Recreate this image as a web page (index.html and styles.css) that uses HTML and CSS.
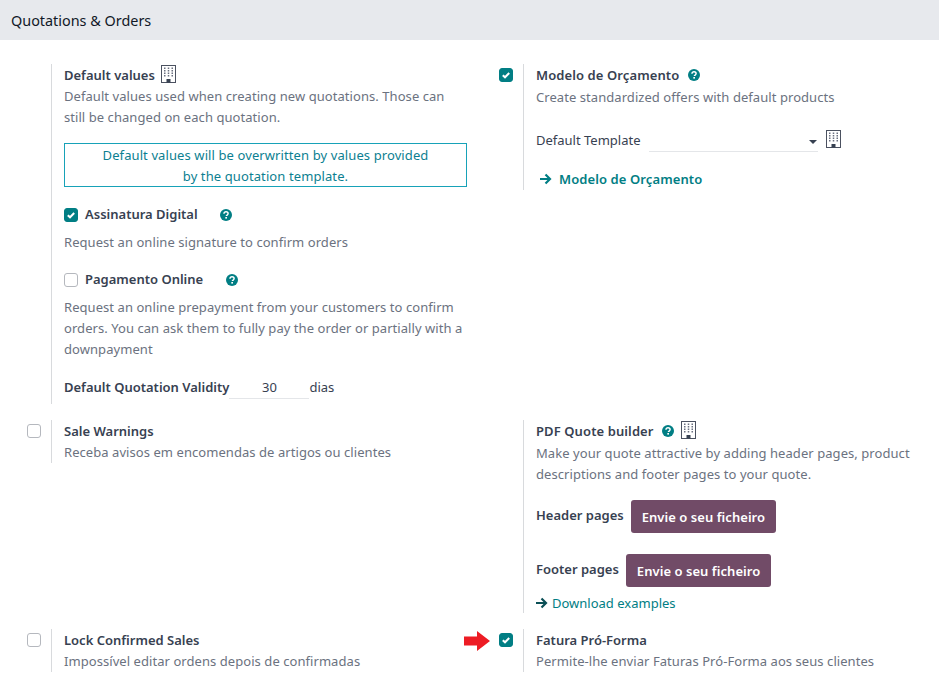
FILE: index.html
```html
<!DOCTYPE html>
<html lang="pt">
<head>
  <meta charset="UTF-8" />
  <meta name="viewport" content="width=device-width, initial-scale=1" />
  <title>Quotations &amp; Orders</title>
  <link rel="stylesheet" href="styles.css">
</head>
<body>
  <svg class="defs" width="0" height="0" aria-hidden="true">
    <symbol id="building" viewBox="0 0 15 18">
      <rect x="0.500" y="0.500" width="14" height="17" fill="#fff" stroke="#4b5160"/>
      <path d="M3 2.500h1.500V4H3zM6.750 2.500h1.500V4h-1.500zM10.500 2.500H12V4h-1.500zM3 5h1.500v1.500H3zM6.750 5h1.500v1.500h-1.500zM10.500 5H12v1.500h-1.500zM3 7.500h1.500V9H3zM6.750 7.500h1.500V9h-1.500zM10.500 7.500H12V9h-1.500zM3 10h1.500v1.500H3zM6.750 10h1.500v1.500h-1.500zM10.500 10H12v1.500h-1.500z" fill="#6b7080"/>
      <rect x="5.500" y="14" width="4" height="3.500" fill="#374151"/>
    </symbol>
    <symbol id="help" viewBox="0 0 12 12">
      <circle cx="6" cy="6" r="6" fill="#017e84"/>
      <path d="M4 4.700C4 3.500 4.900 2.800 6 2.800c1.200 0 2.100.7 2.100 1.800 0 1.500-1.700 1.400-1.700 2.500" fill="none" stroke="#fff" stroke-width="1.500"/>
      <rect x="5.300" y="8" width="1.700" height="1.600" fill="#fff"/>
    </symbol>
    <symbol id="check" viewBox="0 0 14 14">
      <path d="M3.800 7.200l2.200 2.100 4.200-4.300" fill="none" stroke="#fff" stroke-width="2"/>
    </symbol>
    <symbol id="arrow" viewBox="0 0 13 12">
      <path d="M1 6h10M6.500 1.500L11 6l-4.500 4.500" fill="none" stroke="currentColor" stroke-width="2.200"/>
    </symbol>
  </svg>

  <h2 class="section-title">Quotations &amp; Orders</h2>

  <div class="settings">
    <div class="setting">
      <div class="toggle"></div>
      <div class="pane">
        <div class="name">Default values <svg class="icon-building"><use href="#building"/></svg></div>
        <div class="muted">Default values used when creating new quotations. Those can still be changed on each quotation.</div>
        <div class="alert">Default values will be overwritten by values provided<br>by the quotation template.</div>

        <div class="option option-sign">
          <span class="box checked"><svg><use href="#check"/></svg></span>
          <span class="name">Assinatura Digital</span>
          <svg class="icon-help"><use href="#help"/></svg>
        </div>
        <div class="muted option-text">Request an online signature to confirm orders</div>

        <div class="option option-pay">
          <span class="box"></span>
          <span class="name">Pagamento Online</span>
          <svg class="icon-help"><use href="#help"/></svg>
        </div>
        <div class="muted option-text">Request an online prepayment from your customers to confirm orders. You can ask them to fully pay the order or partially with a downpayment</div>

        <div class="validity">
          <span class="name">Default Quotation Validity</span>
          <span class="field field-days">30</span>
          <span>dias</span>
        </div>
      </div>
    </div>

    <div class="setting">
      <div class="toggle"><span class="box checked"><svg><use href="#check"/></svg></span></div>
      <div class="pane">
        <div class="name name-wide name-help">Modelo de Orçamento <svg class="icon-help icon-help-near"><use href="#help"/></svg></div>
        <div class="muted">Create standardized offers with default products</div>
        <div class="template">
          <span>Default Template</span>
          <span class="field field-select"><i class="caret"></i></span>
          <svg class="icon-building"><use href="#building"/></svg>
        </div>
        <a class="link link-bold" href="#"><svg class="icon-arrow"><use href="#arrow"/></svg>Modelo de Orçamento</a>
      </div>
    </div>

    <div class="setting">
      <div class="toggle"><span class="box"></span></div>
      <div class="pane">
        <div class="name">Sale Warnings</div>
        <div class="muted">Receba avisos em encomendas de artigos ou clientes</div>
      </div>
    </div>

    <div class="setting">
      <div class="toggle"></div>
      <div class="pane">
        <div class="name name-wide name-help">PDF Quote builder <svg class="icon-help icon-help-near"><use href="#help"/></svg> <svg class="icon-building"><use href="#building"/></svg></div>
        <div class="muted">Make your quote attractive by adding header pages, product descriptions and footer pages to your quote.</div>
        <div class="upload upload-header">
          <span class="name">Header pages</span>
          <button class="btn" type="button">Envie o seu ficheiro</button>
        </div>
        <div class="upload upload-footer">
          <span class="name">Footer pages</span>
          <button class="btn" type="button">Envie o seu ficheiro</button>
        </div>
        <a class="link link-download" href="#"><svg class="icon-arrow"><use href="#arrow"/></svg>Download examples</a>
      </div>
    </div>

    <div class="setting">
      <div class="toggle"><span class="box"></span></div>
      <div class="pane">
        <div class="name">Lock Confirmed Sales</div>
        <div class="muted">Impossível editar ordens depois de confirmadas</div>
      </div>
    </div>

    <div class="setting">
      <div class="toggle">
        <svg class="red-arrow" viewBox="0 0 26 20"><path d="M0 5.500h13V0l13 10-13 10v-5.500H0z" fill="#ed1c24"/></svg>
        <span class="box checked"><svg><use href="#check"/></svg></span>
      </div>
      <div class="pane">
        <div class="name">Fatura Pró-Forma</div>
        <div class="muted">Permite-lhe enviar Faturas Pró-Forma aos seus clientes</div>
      </div>
    </div>
  </div>
</body>
</html>
```

FILE: styles.css
```css
* {
  box-sizing: border-box;
}
html, body {
  height: 693px;
  overflow: hidden;
}
body {
  margin: 0;
  background-color: #fff;
  color: #374151;
  font-family: "Noto Sans", sans-serif;
  font-size: 13px;
  line-height: 21px;
}
.defs {
  display: block;
  height: 0;
}
.section-title {
  margin: 0;
  height: 40px;
  padding-left: 11px;
  background-color: #e7e9ed;
  color: #111827;
  font-size: 14.4px;
  font-weight: 400;
  line-height: 41px;
}
.settings {
  display: grid;
  grid-template-columns: 472px 467px;
  align-items: start;
  row-gap: 16px;
  padding-top: 24px;
}
.setting {
  display: flex;
}
.toggle {
  display: flex;
  justify-content: flex-end;
  align-items: flex-start;
  gap: 9px;
  width: 51px;
  padding: 4px 10px 0 0;
  flex: none;
}
.pane {
  flex: 1;
  min-width: 0;
  padding: 1px 5px 0 12px;
  border-left: 1px solid #d8dadd;
}
.name {
  color: #374151;
  font-weight: 600;
}
.name-wide {
  letter-spacing: 0.1px;
}
.name-help {
  height: 22px;
}
.muted {
  color: #6b7280;
  letter-spacing: 0.06px;
}
.box {
  display: block;
  width: 14px;
  height: 14px;
  border: 1px solid #b5b8be;
  border-radius: 3px;
  background-color: #fff;
  flex: none;
}
.box.checked {
  border-color: #017e84;
  background-color: #017e84;
}
.box svg {
  display: block;
  width: 14px;
  height: 14px;
  margin: -1px;
}
.icon-building {
  display: inline-block;
  width: 15px;
  height: 18px;
  margin-left: 3px;
  vertical-align: -3px;
}
.icon-help {
  display: inline-block;
  width: 12px;
  height: 12px;
  vertical-align: -1px;
}
.icon-help-near {
  margin-left: 5px;
}
.alert {
  height: 44px;
  margin-top: 15px;
  padding-top: 1px;
  border: 1px solid #17a2b8;
  color: #0c7f91;
  letter-spacing: 0.1px;
  text-align: center;
}
.option {
  display: flex;
  align-items: center;
  gap: 7px;
}
.option .icon-help {
  margin-left: 15px;
}
.option-sign {
  margin-top: 17px;
}
.option-pay {
  margin-top: 16px;
}
.option-pay .icon-help {
  margin-left: 16px;
}
.option-text {
  margin-top: 7px;
}
.validity {
  display: flex;
  align-items: flex-start;
  margin-top: 17px;
  padding-bottom: 5px;
}
.field {
  display: block;
  border-bottom: 1px solid #e4e6e9;
}
.field-days {
  width: 80px;
  height: 22px;
  text-align: center;
}
.template {
  display: flex;
  align-items: flex-start;
  margin-top: 22px;
}
.field-select {
  position: relative;
  width: 169px;
  height: 22px;
  margin: 0 8px;
}
.caret {
  position: absolute;
  right: 1px;
  top: 10px;
  border: 4px solid transparent;
  border-top-color: #374151;
  border-bottom: 0;
}
.template .icon-building {
  margin: 0;
}
.link {
  display: block;
  color: #017e84;
  text-decoration: none;
}
.link-bold {
  margin-top: 17px;
  padding-left: 3px;
  font-weight: 600;
  letter-spacing: 0.1px;
}
.icon-arrow {
  width: 13px;
  height: 12px;
  margin-right: 7px;
  vertical-align: -1px;
}
.link-download .icon-arrow {
  margin: 0 4px 0 -1px;
  color: #0b4f56;
}
.upload {
  display: flex;
  align-items: flex-start;
  gap: 7px;
}
.upload .name {
  margin-top: 5px;
}
.upload-header {
  margin-top: 15px;
}
.upload-footer {
  margin-top: 21px;
}
.btn {
  height: 33px;
  padding: 0 11px;
  border: 0;
  border-radius: 3px;
  background-color: #714b67;
  color: #fff;
  font-family: inherit;
  font-size: 13px;
  font-weight: 600;
  letter-spacing: 0.05px;
}
.link-download {
  height: 20px;
  margin-top: 6px;
}
.red-arrow {
  flex: none;
  width: 26px;
  height: 20px;
  margin-top: -2px;
}
```
